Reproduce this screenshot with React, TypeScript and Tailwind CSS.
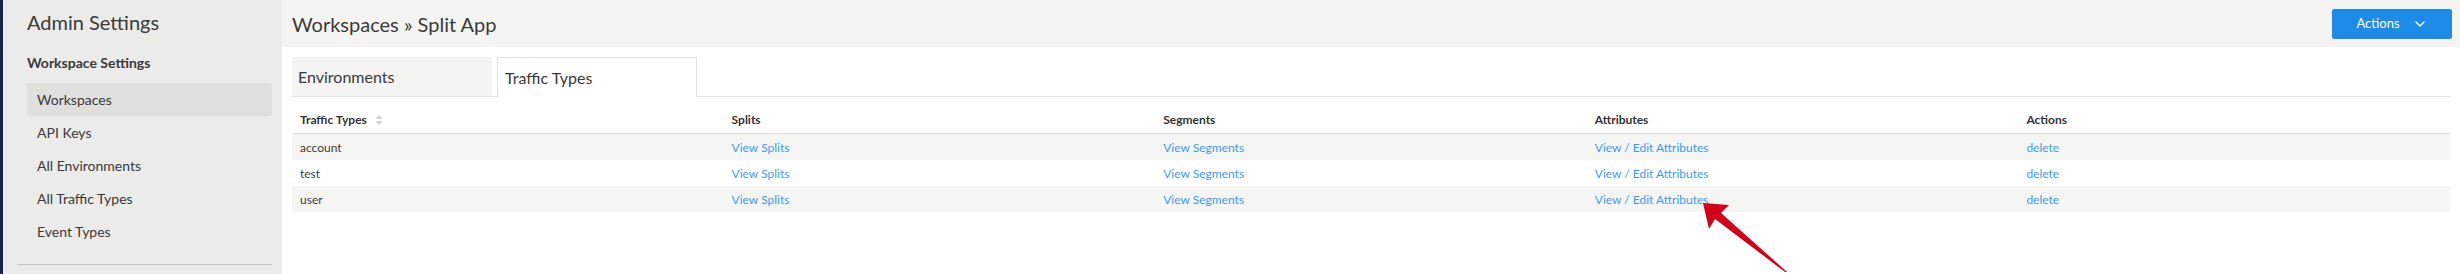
import React from 'react';
import { ChevronDown } from 'lucide-react';

const navItems = ['Workspaces', 'API Keys', 'All Environments', 'All Traffic Types', 'Event Types'];

const rows = ['account', 'test', 'user'];

const columns = ['Traffic Types', 'Splits', 'Segments', 'Attributes', 'Actions'];

function SortIcon() {
  return (
    <svg width="8" height="12" viewBox="0 0 8 12" className="ml-[8px]">
      <path d="M4 1 L7.5 5 L0.5 5 Z" fill="#cfcfcf" />
      <path d="M4 11 L7.5 7 L0.5 7 Z" fill="#cfcfcf" />
    </svg>
  );
}

export default function App() {
  return (
    <div className="relative flex h-[274px] w-full overflow-hidden bg-white font-['Lato',_'Liberation_Sans',_sans-serif] text-[#3a3a3a]">
      {/* Sidebar */}
      <aside className="flex w-[282px] shrink-0 flex-col border-l-[3px] border-[#152a49] bg-[#ebebea]">
        <h1 className="pl-[24px] pt-[8px] text-[20px] leading-[28px] text-[#3a3a3a]">Admin Settings</h1>
        <h2 className="pl-[24px] pt-[18px] text-[14px] font-bold leading-[18px] text-[#3a3a3a]">Workspace Settings</h2>
        <nav className="mt-[11px] flex flex-col pl-[24px] pr-[10px]">
          {navItems.map((item, i) => (
            <div
              key={item}
              className={`flex h-[33px] items-center rounded-[3px] px-[10px] text-[14px] ${i === 0 ? 'bg-[#dfdfde]' : ''}`}
            >
              {item}
            </div>
          ))}
        </nav>
        <div className="ml-[14px] mr-[10px] mt-[16px] border-t border-[#c4c4c4]" />
      </aside>

      {/* Main */}
      <main className="flex min-w-0 flex-1 flex-col">
        <header className="flex h-[47px] items-center justify-between bg-[#f4f4f2] pl-[10px] pr-[8px]">
          <div className="text-[20px] text-[#3a3a3a]">Workspaces » Split App</div>
          <button className="flex h-[30px] w-[120px] items-center justify-center gap-[12px] rounded-[2px] bg-[#1f8be8] text-[13px] text-white">
            Actions
            <ChevronDown size={16} strokeWidth={2} />
          </button>
        </header>

        <div className="px-[10px]">
          <div className="mt-[10px] flex border-b border-[#e2e2e2]">
            <div className="flex h-[39px] w-[200px] items-center bg-[#f4f4f2] px-[6px] text-[16px]">Environments</div>
            <div className="-mb-px ml-[5px] flex h-[40px] w-[200px] items-center border border-b-0 border-[#e2e2e2] bg-white px-[7px] text-[16px]">
              Traffic Types
            </div>
          </div>

          <div className="mt-[10px]">
            <div className="grid h-[27px] grid-cols-5 items-center border-b border-[#dedede] text-[12px] font-bold text-[#333]">
              {columns.map((c, i) => (
                <div key={c} className="flex items-center px-[8px]">
                  {c}
                  {i === 0 && <SortIcon />}
                </div>
              ))}
            </div>
            {rows.map((r, i) => (
              <div
                key={r}
                className={`grid h-[26px] grid-cols-5 items-center pt-[1px] text-[12px] ${i % 2 === 0 ? 'bg-[#f5f5f3]' : 'bg-white'}`}
              >
                <div className="px-[8px]">{r}</div>
                <div className="px-[8px] text-[#3d9cf2]">View Splits</div>
                <div className="px-[8px] text-[#3d9cf2]">View Segments</div>
                <div className="px-[8px] text-[#3d9cf2]">View / Edit Attributes</div>
                <div className="px-[8px] text-[#3d9cf2]">delete</div>
              </div>
            ))}
          </div>
        </div>
      </main>

      {/* annotation arrow */}
      <svg className="pointer-events-none absolute left-0 top-0" width="2460" height="274">
        <polygon
          points="1703,203 1729,205 1721,213 1787,272 1785,272 1715,219 1709,229"
          fill="#d0021b"
        />
      </svg>
    </div>
  );
}
